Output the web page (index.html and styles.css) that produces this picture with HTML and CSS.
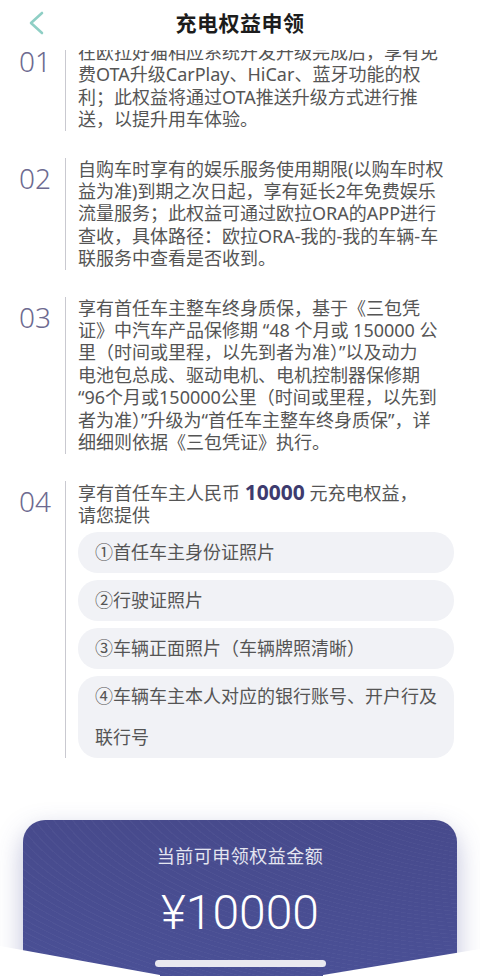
FILE: index.html
```html
<!DOCTYPE html>
<html lang="zh-CN">
<head>
    <meta charset="UTF-8">
    <meta name="viewport" content="width=device-width, initial-scale=1.0">
    <title>充电权益申领</title>
    <link rel="stylesheet" href="styles.css">
</head>
<body>

    <div class="page">
        <header class="topbar">
            <svg class="back" width="20" height="24" viewBox="0 0 20 24">
                <path d="M15 2 L4 12 L15 22" fill="none" stroke="#8fcfc5" stroke-width="2.6" stroke-linecap="round" stroke-linejoin="round"/>
            </svg>
            <h1>充电权益申领</h1>
        </header>

        <main class="content">
            <div class="list">
                <section class="item first">
                    <div class="num">01</div>
                    <div class="body">
                        <p>在欧拉好猫相应系统开发升级完成后，享有免<br>费OTA升级CarPlay、HiCar、蓝牙功能的权<br>利；此权益将通过OTA推送升级方式进行推<br>送，以提升用车体验。</p>
                    </div>
                </section>

                <section class="item">
                    <div class="num">02</div>
                    <div class="body">
                        <p>自购车时享有的娱乐服务使用期限(以购车时权<br>益为准)到期之次日起，享有延长2年免费娱乐<br>流量服务；此权益可通过欧拉ORA的APP进行<br>查收，具体路径：欧拉ORA-我的-我的车辆-车<br>联服务中查看是否收到。</p>
                    </div>
                </section>

                <section class="item">
                    <div class="num">03</div>
                    <div class="body">
                        <p>享有首任车主整车终身质保，基于《三包凭<br>证》中汽车产品保修期 “48 个月或 150000 公<br>里（时间或里程，以先到者为准）”以及动力<br>电池包总成、驱动电机、电机控制器保修期<br>“96个月或150000公里（时间或里程，以先到<br>者为准）”升级为“首任车主整车终身质保”，详<br>细细则依据《三包凭证》执行。</p>
                    </div>
                </section>

                <section class="item">
                    <div class="num">04</div>
                    <div class="body">
                        <p>享有首任车主人民币 <b>10000</b> 元充电权益，<br>请您提供</p>
                        <ul class="docs">
                            <li>①首任车主身份证照片</li>
                            <li>②行驶证照片</li>
                            <li>③车辆正面照片（车辆牌照清晰）</li>
                            <li>④车辆车主本人对应的银行账号、开户行及<br>联行号</li>
                        </ul>
                    </div>
                </section>
            </div>
        </main>

        <div class="sheet">
            <div class="card">
                <p class="card-label">当前可申领权益金额</p>
                <p class="card-amount">¥10000</p>
            </div>
            <!-- white cut-outs at the bottom corners -->
            <svg class="cut" width="480" height="30" viewBox="0 0 480 30">
                <polygon points="0,0 160,29 160,30 0,30" fill="#fff"/>
                <polygon points="480,3 323,29 323,30 480,30" fill="#fff"/>
            </svg>
            <div class="home-bar"></div>
        </div>
    </div>

</body>
</html>
```

FILE: styles.css
```css
body {
    margin: 0;
    padding: 0;
    background: #fff;
    font-family: "Noto Sans", "Noto Sans CJK SC", sans-serif;
    color: #555;
    overflow: hidden;
}

.page {
    width: 480px;
    height: 976px;
    display: flex;
    flex-direction: column;
    overflow: hidden;
}

/* Header */
.topbar {
    height: 50px;
    flex: none;
    display: flex;
    align-items: flex-start;
    justify-content: center;
    position: relative;
    z-index: 2;
    background: #fff;
}

.back {
    position: absolute;
    left: 27px;
    top: 11px;
}

.topbar h1 {
    margin: 0;
    padding-top: 8px;
    font-size: 21px;
    line-height: 30px;
    font-weight: 700;
    color: #1c1c1c;
    letter-spacing: 0.5px;
}

/* Content */
.content {
    flex: 1;
}

.list {
    display: flex;
    flex-direction: column;
    gap: 27px;
}

.item {
    display: flex;
}

.item.first {
    margin-top: -9px;
}

.num {
    width: 65px;
    flex: none;
    box-sizing: border-box;
    padding-left: 19px;
    padding-top: 9px;
    font-size: 28px;
    line-height: 23px;
    font-weight: 300;
    color: #6d6a90;
}

.body {
    flex: 1;
    border-left: 1.5px solid #c9c9d0;
    padding-left: 12px;
    padding-right: 28px;
}

.body p {
    margin: 0;
    font-size: 18px;
    line-height: 22.4px;
    white-space: nowrap;
}

.body b {
    font-size: 21px;
    font-weight: 700;
    color: #3e3b6e;
}

.docs {
    list-style: none;
    margin: 6px 0 0;
    padding: 0;
    display: flex;
    flex-direction: column;
    gap: 7px;
}

.docs li {
    background: #f1f2f6;
    border-radius: 20px;
    padding: 0 17px;
    font-size: 18px;
    line-height: 41px;
    white-space: nowrap;
}

/* Bottom sheet */
.sheet {
    height: 156px;
    flex: none;
    position: relative;
    padding: 0 23px;
}

.card {
    height: 100%;
    border-radius: 22px 22px 0 0;
    background:
        repeating-radial-gradient(ellipse at 120% -40%, rgba(255, 255, 255, 0) 0 7px, rgba(255, 255, 255, 0.035) 8px 9px),
        linear-gradient(180deg, #474a8c 0%, #4a5096 100%);
    box-shadow: 0 10px 26px rgba(70, 75, 150, 0.35);
    text-align: center;
    padding-top: 25px;
    box-sizing: border-box;
}

.card-label {
    margin: 0;
    font-size: 18px;
    line-height: 22px;
    color: #e4e5f0;
    letter-spacing: 0.5px;
}

.card-amount {
    margin: 18px 0 0;
    font-family: Roboto, "Noto Sans", sans-serif;
    font-size: 48px;
    line-height: 56px;
    font-weight: 300;
    color: #fff;
}

.cut {
    position: absolute;
    left: 0;
    bottom: 0;
    display: block;
}

.home-bar {
    position: absolute;
    left: 155px;
    bottom: 9px;
    width: 171px;
    height: 7px;
    border-radius: 4px;
    background: #e9e9f0;
}
```
